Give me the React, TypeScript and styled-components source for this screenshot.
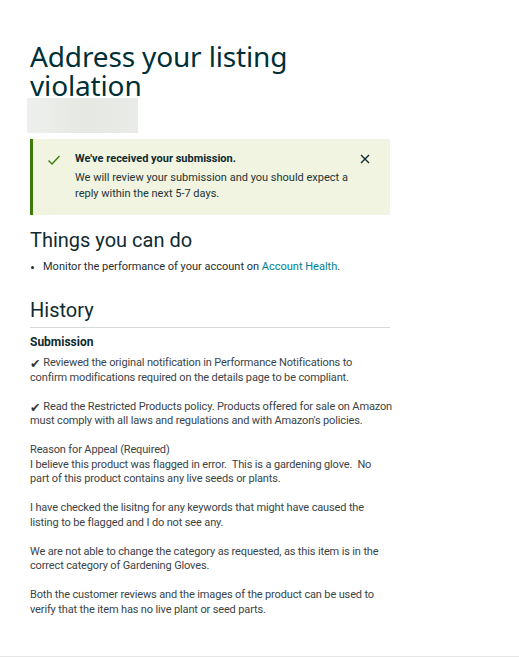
import React from "react";
import styled, { createGlobalStyle } from "styled-components";

const Global = createGlobalStyle`
  html, body {
    margin: 0;
    padding: 0;
    background: #ffffff;
  }
  body {
    font-family: Roboto, "Noto Sans", Arial, sans-serif;
    color: #0f1111;
  }
`;

const Page = styled.div`
  box-sizing: border-box;
  height: 657px;
  padding: 42px 0 0 30px;
  border-bottom: 1px solid #e6e6e6;
`;

const Column = styled.div`
  width: 360px;
  display: flex;
  flex-direction: column;
`;

const Title = styled.h1`
  margin: 0;
  font-family: "Noto Sans", Roboto, sans-serif;
  font-size: 28px;
  line-height: 29px;
  font-weight: 400;
  color: #002f36;
  letter-spacing: -0.15px;
`;

const Redacted = styled.div`
  width: 111px;
  height: 35px;
  margin: -2px 0 0 -3px;
  background: linear-gradient(90deg, #eef0ed 0%, #e6e8e4 50%, #e9ebe8 100%);
`;

const Alert = styled.div`
  margin-top: 6px;
  box-sizing: border-box;
  height: 76px;
  background: #f0f4e0;
  border-left: 3px solid #3c7a0c;
  display: flex;
  align-items: flex-start;
  padding: 12px 18px 0 14px;
`;

const AlertIcon = styled.div`
  width: 14px;
  height: 14px;
  margin-top: 1px;
  flex: none;
`;

const AlertBody = styled.div`
  flex: 1;
  margin-left: 14px;
`;

const AlertTitle = styled.div`
  font-size: 11px;
  line-height: 16px;
  font-weight: 700;
  color: #0f2a30;
`;

const AlertText = styled.div`
  font-size: 11px;
  line-height: 16px;
  color: #1f3336;
  margin-top: 3px;
`;

const Close = styled.button`
  flex: none;
  width: 14px;
  height: 14px;
  padding: 0;
  margin-top: 1px;
  border: none;
  background: none;
  display: flex;
  align-items: center;
  justify-content: center;
`;

const SectionHeading = styled.h2<{ $top: number }>`
  margin: ${(p) => p.$top}px 0 0;
  font-size: 20px;
  line-height: 24px;
  font-weight: 400;
  color: #0f2a30;
`;

const BulletList = styled.ul`
  margin: 7px 0 0;
  padding: 0 0 0 13px;
  font-size: 11px;
  line-height: 15px;
  color: #1f2f33;
  li::marker {
    font-size: 9px;
  }
`;

const Link = styled.a`
  color: #00808f;
  text-decoration: none;
`;

const Rule = styled.div`
  height: 1px;
  background: #d5d9d9;
  margin-top: 5px;
`;

const SubHeading = styled.h3`
  margin: 6px 0 0;
  font-size: 12px;
  line-height: 16px;
  font-weight: 700;
  color: #0f2a30;
`;

const Entries = styled.div`
  margin-top: 6px;
  display: flex;
  flex-direction: column;
  gap: 14.5px;
`;

const Para = styled.p`
  margin: 0;
  font-size: 11px;
  line-height: 14.5px;
  letter-spacing: -0.14px;
  color: #3a4447;
  white-space: nowrap;
`;

const Tick = styled.span`
  display: inline-block;
  height: 14.5px;
  vertical-align: top;
  font-family: "DejaVu Sans", sans-serif;
  font-size: 12.5px;
  line-height: 15px;
  color: #2c3437;
  margin-right: 3px;
`;

const Check = () => (
  <svg width="14" height="14" viewBox="0 0 14 14" fill="none">
    <path d="M1.5 7.5 L5 11 L12.5 3" stroke="#3c7a0c" strokeWidth="1.3" />
  </svg>
);

const Cross = () => (
  <svg width="12" height="12" viewBox="0 0 12 12" fill="none">
    <path d="M2 2 L10 10 M10 2 L2 10" stroke="#0f2a30" strokeWidth="1.4" />
  </svg>
);

type Entry = { checked?: boolean; lines: string[] };

const history: Entry[] = [
  {
    checked: true,
    lines: [
      "Reviewed the original notification in Performance Notifications to",
      "confirm modifications required on the details page to be compliant.",
    ],
  },
  {
    checked: true,
    lines: [
      "Read the Restricted Products policy. Products offered for sale on Amazon",
      "must comply with all laws and regulations and with Amazon's policies.",
    ],
  },
  {
    lines: [
      "Reason for Appeal (Required)",
      "I believe this product was flagged in error.\u00a0 This is a gardening glove.\u00a0 No",
      "part of this product contains any live seeds or plants.",
    ],
  },
  {
    lines: [
      "I have checked the lisitng for any keywords that might have caused the",
      "listing to be flagged and I do not see any.",
    ],
  },
  {
    lines: [
      "We are not able to change the category as requested, as this item is in the",
      "correct category of Gardening Gloves.",
    ],
  },
  {
    lines: [
      "Both the customer reviews and the images of the product can be used to",
      "verify that the item has no live plant or seed parts.",
    ],
  },
];

export default function App() {
  return (
    <>
      <Global />
      <Page>
        <Column>
          <Title>
            Address your listing
            <br />
            violation
          </Title>
          <Redacted />
          <Alert>
            <AlertIcon>
              <Check />
            </AlertIcon>
            <AlertBody>
              <AlertTitle>We've received your submission.</AlertTitle>
              <AlertText>
                We will review your submission and you should expect a reply within the next 5-7 days.
              </AlertText>
            </AlertBody>
            <Close aria-label="Dismiss">
              <Cross />
            </Close>
          </Alert>
          <SectionHeading $top={13}>Things you can do</SectionHeading>
          <BulletList>
            <li>
              Monitor the performance of your account on <Link href="#">Account Health</Link>.
            </li>
          </BulletList>
          <SectionHeading $top={24}>History</SectionHeading>
          <Rule />
          <SubHeading>Submission</SubHeading>
          <Entries>
            {history.map((entry, i) => (
              <Para key={i}>
                {entry.checked && <Tick>✔</Tick>}
                {entry.lines.map((line, j) => (
                  <React.Fragment key={j}>
                    {j > 0 && <br />}
                    {line}
                  </React.Fragment>
                ))}
              </Para>
            ))}
          </Entries>
        </Column>
      </Page>
    </>
  );
}
